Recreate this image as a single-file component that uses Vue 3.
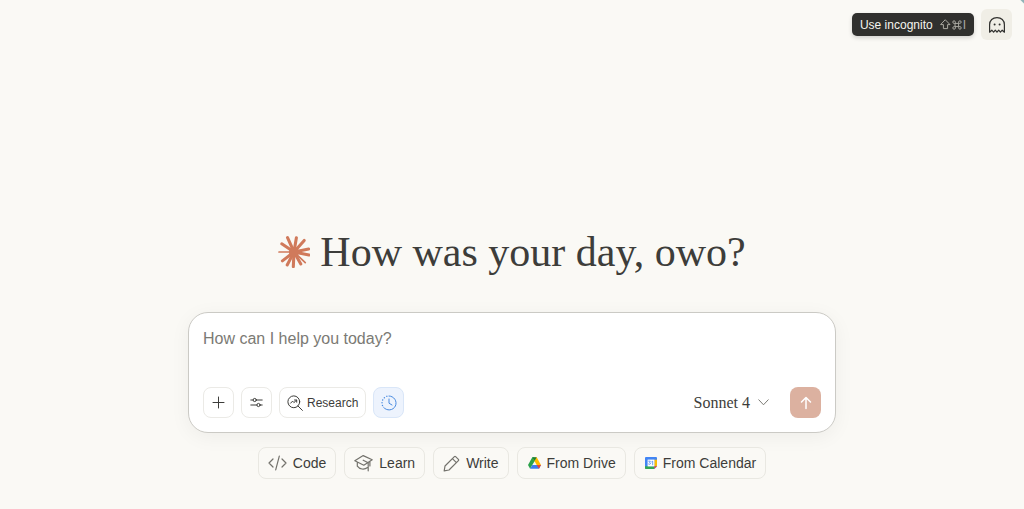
<script setup>
import { ref } from 'vue'

const prompt = ref('')
const rays = [
  [28, 5], [54, 5], [77, 13], [90, 38], [91, 56], [80, 78],
  [67, 82], [45, 90], [27, 85], [13, 73], [3, 47], [11, 23],
]
</script>

<template>
  <div class="page">
    <header class="topbar">
      <div id="incognito-tip" class="tooltip" role="tooltip">
        <span>Use incognito</span>
        <span class="keys">
          <svg width="11" height="11" viewBox="0 0 11 11" aria-hidden="true"><path d="M5.5 1 L10 5.6 H7.6 V9.6 H3.4 V5.6 H1 Z" /></svg>
          <svg width="10" height="10" viewBox="0 0 10 10" aria-hidden="true"><path d="M3.4 3.4 H6.6 V6.6 H3.4 Z M3.4 3.4 H2.2 A1.3 1.3 0 1 1 3.4 2.1 Z M6.6 3.4 V2.1 A1.3 1.3 0 1 1 7.9 3.4 Z M6.6 6.6 H7.9 A1.3 1.3 0 1 1 6.6 7.9 Z M3.4 6.6 V7.9 A1.3 1.3 0 1 1 2.1 6.6 Z" /></svg>
          <span>I</span>
        </span>
      </div>
      <button class="ghost" type="button" aria-label="Use incognito" aria-describedby="incognito-tip">
        <svg width="18" height="18" viewBox="0 0 18 18" aria-hidden="true">
          <path d="M1.6 16.2 V8.8 C1.6 4.4 4.7 1.6 9 1.6 C13.3 1.6 16.4 4.4 16.4 8.8 V16.2 L14.2 14.2 L12.4 16.2 L10.7 14.2 L9 16.2 L7.3 14.2 L5.6 16.2 L3.8 14.2 Z" />
          <circle cx="6.6" cy="8.4" r="1" /><circle cx="11.6" cy="8.4" r="1" />
        </svg>
      </button>
    </header>

    <main class="main">
      <h1 class="greeting">
        <svg class="spark" width="32" height="32" viewBox="0 0 94 94" aria-hidden="true">
          <line v-for="(r, i) in rays" :key="i" x1="47" y1="47" :x2="r[0]" :y2="r[1]" :class="{ thin: i === 10 || i === 5 }" />
          <circle cx="47" cy="47" r="15" />
        </svg>
        <span>How was your day, owo?</span>
      </h1>

      <form class="composer" @submit.prevent>
        <textarea v-model="prompt" rows="1" aria-label="Message" placeholder="How can I help you today?"></textarea>
        <div class="tools">
          <button class="tool" type="button" aria-label="Add">
            <svg width="13" height="13" viewBox="0 0 13 13"><path d="M6.5 1 V12 M1 6.5 H12" /></svg>
          </button>
          <button class="tool" type="button" aria-label="Settings">
            <svg width="13" height="11" viewBox="0 0 13 11"><path d="M.8 3 H3 M6.4 3 H12.2 M.8 8 H6.8 M10.2 8 H12.2" /><circle cx="4.7" cy="3" r="1.6" /><circle cx="8.5" cy="8" r="1.6" /></svg>
          </button>
          <button class="tool research" type="button">
            <svg width="16" height="16" viewBox="0 0 16 16" aria-hidden="true"><circle cx="6.8" cy="6.8" r="5.9" /><path d="M11 11 L15.4 15.4 M3.6 8.2 L5.6 6.1 L6.9 7.6 L9.5 5.2 M7.5 5 H9.7 V7.2" /></svg>
            <span>Research</span>
          </button>
          <button class="tool active" type="button" aria-label="Recent chats" aria-pressed="true">
            <svg width="16" height="16" viewBox="0 0 16 16"><path d="M8 1 A7 7 0 1 1 2.6 12.4 M8 4 V8.2 L11 10" /><path class="dots" d="M1.5 10.5 A7 7 0 0 1 6.2 1.2" /></svg>
          </button>
          <button class="model" type="button">
            <span>Sonnet 4</span>
            <svg width="11" height="7" viewBox="0 0 11 7" aria-hidden="true"><path d="M.8 .8 L5.5 5.8 L10.2 .8" /></svg>
          </button>
          <button class="send" type="submit" aria-label="Send message">
            <svg width="12" height="14" viewBox="0 0 12 14"><path d="M6 12.5 V1.8 M1.5 6 L6 1.5 L10.5 6" /></svg>
          </button>
        </div>
      </form>

      <nav class="chips" aria-label="Suggestions">
        <button class="chip" type="button">
          <svg width="19" height="16" viewBox="0 0 19 16" aria-hidden="true"><path d="M5 4 L1 8 L5 12 M14 4 L18 8 L14 12 M11.3 1.2 L7.7 14.8" /></svg>
          <span>Code</span>
        </button>
        <button class="chip" type="button">
          <svg width="19" height="18" viewBox="0 0 19 18" aria-hidden="true"><path d="M.8 6.8 L9.2 1.6 L18.2 5.8 L9.8 11.2 Z M3.3 8.3 V12.2 C5.6 15.4 10.2 16 13.6 13.6 M9.2 6.2 L14.2 8.8 V16.8 M15.9 7.5 V12" /></svg>
          <span>Learn</span>
        </button>
        <button class="chip" type="button">
          <svg width="17" height="17" viewBox="0 0 17 17" aria-hidden="true"><path d="M1.2 15.8 L2 11 L11.4 1.6 Q12 1 12.6 1.6 L15.4 4.4 Q16 5 15.4 5.6 L6 15 Z M9.4 3.6 L13.4 7.6" /></svg>
          <span>Write</span>
        </button>
        <button class="chip" type="button">
          <svg class="brand" width="13" height="12" viewBox="0 0 13 12" aria-hidden="true">
            <path fill="#2ba24c" d="M4.3 .3 H6.5 V4.2 L2.1 11.7 L0 8 Z" /><path fill="#ffba00" d="M6.5 .3 H8.7 L13 8 H8.7 L5.4 2.2 Z" /><path fill="#188038" d="M4.3 .3 H8.7 L6.5 4.1 Z" /><path fill="#3c7df0" d="M4.3 8 H13 L11 11.7 H2.1 Z" /><path fill="#ea4335" d="M8.7 8 H13 L11 11.7 Z" />
          </svg>
          <span>From Drive</span>
        </button>
        <button class="chip" type="button">
          <svg class="brand" width="12" height="12" viewBox="0 0 12 12" aria-hidden="true">
            <rect width="12" height="12" rx="1" fill="#4285f4" /><path fill="#fbbc04" d="M9.3 2.7 H12 V9.3 H9.3 Z" /><path fill="#34a853" d="M0 9.3 H9.3 V12 H1 Q0 12 0 11 Z" /><path fill="#ea4335" d="M9.3 9.3 H12 L9.3 12 Z" /><path fill="#faf9f5" d="M12 9.4 V12 H9.4 Z" /><rect x="2.6" y="2.6" width="6.8" height="6.8" fill="#fff" /><path d="M3.7 4.2 H5.3 L4.6 5.6 Q5.8 5.7 5.3 6.9 Q4.6 7.8 3.6 7.1 M6.7 4.8 L7.7 4.2 V7.8" fill="none" stroke="#4285f4" stroke-width=".8" />
          </svg>
          <span>From Calendar</span>
        </button>
      </nav>
    </main>
  </div>
</template>

<style>
body { background: #faf9f5; }
</style>

<style scoped>
.page {
  box-sizing: border-box;
  min-height: 100vh;
  background: linear-gradient(225deg, #8fb3b8 2px, transparent 3px), #faf9f5;
  color: #3d3d3a;
  font-family: "Liberation Sans", Arial, sans-serif;
}
.page * { box-sizing: border-box; }
button { font: inherit; color: inherit; margin: 0; padding: 0; cursor: pointer; }
svg { display: block; flex: none; fill: none; stroke: currentColor; stroke-linecap: round; stroke-linejoin: round; }
.topbar {
  display: flex;
  justify-content: flex-end;
  align-items: center;
  gap: 7px;
  padding: 9px 12px 0 0;
}
.tooltip {
  display: flex;
  align-items: center;
  gap: 7px;
  height: 23px;
  padding: 0 8px;
  border-radius: 5px;
  background: #30302e;
  color: #f5f4ef;
  font-size: 12px;
  line-height: 16px;
  box-shadow: 0 2px 4px rgba(0, 0, 0, .16);
}
.keys { display: flex; align-items: center; gap: 1px; color: #aaa9a2; }
.ghost {
  display: grid;
  place-items: center;
  width: 31px;
  height: 31px;
  border: 0;
  border-radius: 6px;
  background: #f0eee6;
  color: #30302e;
}
.ghost svg { stroke-width: 1.2; }
.ghost circle { fill: currentColor; stroke: none; }
.main {
  display: flex;
  flex-direction: column;
  align-items: center;
  padding: 188px 16px 28px;
}
.greeting {
  display: flex;
  align-items: center;
  gap: 10px;
  margin: 0;
  font-family: "Liberation Serif", serif;
  font-size: 42px;
  font-weight: 400;
  line-height: 48px;
  white-space: nowrap;
}
.spark { stroke: #d07a5b; stroke-width: 9; }
.spark .thin { stroke-width: 5; }
.spark circle { fill: #d07a5b; stroke: none; }
.composer {
  display: flex;
  flex-direction: column;
  gap: 36px;
  width: 100%;
  max-width: 648px;
  margin-top: 36px;
  padding: 14px;
  border: 1px solid #cbcac5;
  border-radius: 20px;
  background: #fff;
  box-shadow: 0 4px 20px rgba(0, 0, 0, .05);
}
textarea {
  display: block;
  width: 100%;
  height: 24px;
  padding: 0;
  border: 0;
  outline: 0;
  resize: none;
  background: transparent;
  color: inherit;
  font: 400 16px/24px "Liberation Sans", Arial, sans-serif;
}
textarea::placeholder { color: #7b7a74; opacity: 1; }
.tools { display: flex; align-items: center; gap: 7px; }
.tool {
  display: flex;
  align-items: center;
  justify-content: center;
  width: 31px;
  height: 31px;
  border: 1px solid #ebeae6;
  border-radius: 8px;
  background: #fff;
}
.tool.research { width: auto; gap: 4px; padding: 0 7px; font-size: 12px; }
.tool.active { border-color: #d9e6f8; background: #edf3fd; color: #4a8be0; }
.dots { stroke-dasharray: .1 2.7; stroke-width: 1.4; }
.model {
  display: flex;
  align-items: center;
  gap: 8px;
  margin-left: auto;
  margin-right: 14px;
  border: 0;
  background: transparent;
  font-family: "Liberation Serif", serif;
  font-size: 16px;
}
.model svg { stroke: #7b7a74; }
.send {
  display: grid;
  place-items: center;
  width: 31px;
  height: 31px;
  border: 0;
  border-radius: 8px;
  background: #dcb1a0;
  color: #fff;
}
.send svg { stroke-width: 1.5; }
.chips { display: flex; flex-wrap: wrap; justify-content: center; gap: 8px; margin-top: 14px; }
.chip {
  display: flex;
  align-items: center;
  gap: 6px;
  height: 32px;
  padding: 0 9px;
  border: 1px solid #e9e8e2;
  border-radius: 8px;
  background: #faf9f5;
  font-size: 14px;
}
.chip svg { color: #73726c; stroke-width: 1.2; }
.chip .brand { stroke: none; margin-left: 1px; }
</style>
